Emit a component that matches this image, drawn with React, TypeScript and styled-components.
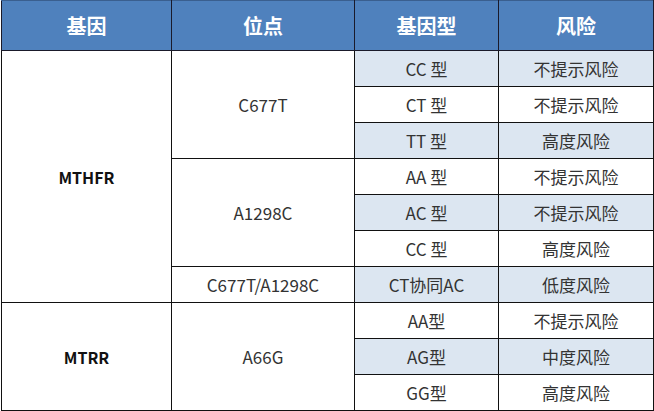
import { createGlobalStyle, styled } from "styled-components";

type Row = {
  gene?: { name: string; span: number };
  site?: { name: string; span: number };
  type: string;
  risk: string;
  shaded: boolean;
};

const rows: Row[] = [
  { gene: { name: "MTHFR", span: 7 }, site: { name: "C677T", span: 3 }, type: "CC 型", risk: "不提示风险", shaded: true },
  { type: "CT 型", risk: "不提示风险", shaded: false },
  { type: "TT 型", risk: "高度风险", shaded: true },
  { site: { name: "A1298C", span: 3 }, type: "AA 型", risk: "不提示风险", shaded: false },
  { type: "AC 型", risk: "不提示风险", shaded: true },
  { type: "CC 型", risk: "高度风险", shaded: false },
  { site: { name: "C677T/A1298C", span: 1 }, type: "CT协同AC", risk: "低度风险", shaded: true },
  { gene: { name: "MTRR", span: 3 }, site: { name: "A66G", span: 3 }, type: "AA型", risk: "不提示风险", shaded: false },
  { type: "AG型", risk: "中度风险", shaded: true },
  { type: "GG型", risk: "高度风险", shaded: false },
];

const App = () => {
  return (
    <>
      <GlobalStyle />
      <Table>
        <colgroup>
          <col style={{ width: 170 }} />
          <col style={{ width: 183 }} />
          <col style={{ width: 144 }} />
          <col style={{ width: 155 }} />
        </colgroup>
        <thead>
          <tr>
            <HeadCell>基因</HeadCell>
            <HeadCell>位点</HeadCell>
            <HeadCell>基因型</HeadCell>
            <HeadCell>风险</HeadCell>
          </tr>
        </thead>
        <tbody>
          {rows.map((row, i) => (
            <BodyRow key={i}>
              {row.gene && <GeneCell rowSpan={row.gene.span}>{row.gene.name}</GeneCell>}
              {row.site && <Cell rowSpan={row.site.span}>{row.site.name}</Cell>}
              <Cell $shaded={row.shaded}>{row.type}</Cell>
              <Cell $shaded={row.shaded}>{row.risk}</Cell>
            </BodyRow>
          ))}
        </tbody>
      </Table>
    </>
  );
};

export default App;

const GlobalStyle = createGlobalStyle`
  html, body {
    margin: 0;
    padding: 0;
    background: #ffffff;
    font-family: "Noto Sans CJK SC", "Noto Sans", sans-serif;
  }
`;

const Table = styled.table`
  width: 652px;
  border-collapse: collapse;
  table-layout: fixed;
  margin-left: 1px;
`;

const HeadCell = styled.th`
  height: 49px;
  padding: 0;
  background-color: #4f81bd;
  color: #ffffff;
  font-size: 20px;
  font-weight: 700;
  text-align: center;
  border: 1.5px solid #1a1a2a;
  border-top-color: #3a5f8f;
`;

const BodyRow = styled.tr`
  height: 36px;
`;

const Cell = styled.td<{ $shaded?: boolean }>`
  padding: 0;
  text-align: center;
  vertical-align: middle;
  font-size: 17px;
  color: #333333;
  background-color: ${(p) => (p.$shaded ? "#dce6f1" : "#ffffff")};
  border: 1.5px solid #111111;
`;

const GeneCell = styled(Cell)`
  font-weight: 700;
  color: #111111;
  font-size: 16px;
`;
